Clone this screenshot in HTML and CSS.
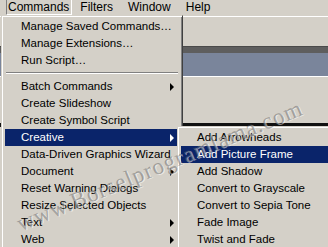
FILE: index.html
```html
<!DOCTYPE html>
<html lang="en">
<head>
	<meta charset="UTF-8">
	<title>Commands menu</title>
	<link rel="stylesheet" href="styles.css">
</head>
<body>
	<div class="menubar">
		<span class="bar-item open">Commands</span>
		<span class="bar-item">Filters</span>
		<span class="bar-item">Window</span>
		<span class="bar-item">Help</span>
	</div>
	<div class="workspace">
		<div class="toolbar"></div>
		<div class="band"></div>
		<div class="doc-tab"></div>
		<div class="panel"></div>
		<div class="panel-edge"></div>
		<div class="canvas"></div>
	</div>

	<ul class="menu main">
		<li>Manage Saved Commands…</li>
		<li>Manage Extensions…</li>
		<li>Run Script…</li>
		<li class="sep"></li>
		<li class="sub">Batch Commands</li>
		<li>Create Slideshow</li>
		<li>Create Symbol Script</li>
		<li class="sub hot">Creative</li>
		<li>Data-Driven Graphics Wizard</li>
		<li class="sub">Document</li>
		<li>Reset Warning Dialogs</li>
		<li>Resize Selected Objects</li>
		<li class="sub">Text</li>
		<li class="sub">Web</li>
	</ul>

	<ul class="menu flyout">
		<li>Add Arrowheads</li>
		<li class="hot">Add Picture Frame</li>
		<li>Add Shadow</li>
		<li>Convert to Grayscale</li>
		<li>Convert to Sepia Tone</li>
		<li>Fade Image</li>
		<li>Twist and Fade</li>
	</ul>

	<div class="watermark">www.Borselprogramlama.com</div>
</body>
</html>
```

FILE: styles.css
```css
html, body {
	margin: 0;
	width: 328px;
	height: 247px;
	overflow: hidden;
}

body {
	position: relative;
	background: #d4d0c8;
	font-family: "Liberation Sans", Tahoma, sans-serif;
	font-size: 11.5px;
	color: #000;
}

.menubar {
	display: flex;
	height: 16px;
	padding-left: 6px;
	align-items: flex-start;
	font-size: 12px;
}

.bar-item {
	padding: 0 6px 0 7px;
	height: 14px;
	line-height: 14px;
	border: 1px solid transparent;
	border-top: 0;
}

.bar-item.open {
	padding: 0 2px 0 1px;
	border-left-color: #808080;
	border-right-color: #fff;
	border-bottom-color: #fff;
}

.workspace {
	display: flex;
	flex-direction: column;
}

.toolbar {
	height: 29px;
	border-top: 1px solid #fff;
}

.band {
	height: 6px;
	background: #5e5e5e;
	border-top: 1px solid #4a4a4a;
}

.doc-tab {
	height: 23px;
	background: #7a859b;
	border-bottom: 1px solid #fff;
}

.panel {
	height: 46px;
}

.panel-edge {
	height: 4px;
	background: #111;
}

.canvas {
	height: 120px;
}

.menu {
	position: absolute;
	margin: 0;
	list-style: none;
	background: #d4d0c8;
	border: 1px solid;
	border-color: #d4d0c8 #404040 #404040 #d4d0c8;
	box-shadow: inset 1px 1px #fff, inset -1px -1px #808080;
	padding: 2px 3px;
}

.main {
	left: 1px;
	top: 15px;
	width: 174px;
}

.flyout {
	left: 177px;
	top: 126px;
	width: 160px;
}

.menu li {
	position: relative;
	height: 17px;
	line-height: 17px;
	padding-left: 16px;
	white-space: nowrap;
}

.menu li.hot {
	background: #0a246a;
	color: #fff;
}

.menu li.sub::after {
	content: "";
	position: absolute;
	right: 5px;
	top: 5px;
	border-left: 4px solid #000;
	border-top: 4px solid transparent;
	border-bottom: 4px solid transparent;
}

.menu li.sub.hot::after {
	border-left-color: #fff;
}

.menu li.sep {
	height: 9px;
	padding: 0;
	margin: 0 1px;
	background: linear-gradient(#d4d0c8 3px, #808080 3px, #808080 4px, #fff 4px, #fff 5px, #d4d0c8 5px);
}

.watermark {
	position: absolute;
	left: 18px;
	top: 212px;
	transform: rotate(-22.5deg);
	transform-origin: left center;
	font-family: "Liberation Serif", serif;
	font-size: 23px;
	letter-spacing: 1px;
	color: rgba(100, 100, 100, 0.5);
	text-shadow: 1px 1px rgba(255, 255, 255, 0.55);
	white-space: nowrap;
	pointer-events: none;
}
```
